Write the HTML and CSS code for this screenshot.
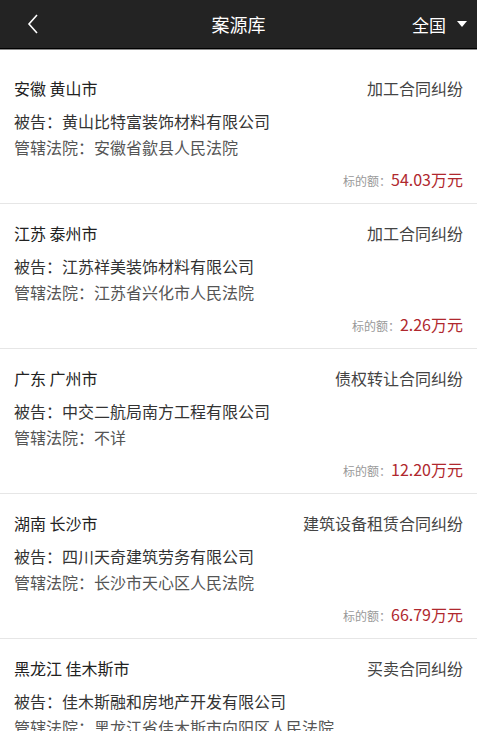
FILE: index.html
```html
<!DOCTYPE html>
<html lang="zh-CN">
<head>
    <meta charset="UTF-8">
    <meta name="viewport" content="width=device-width, initial-scale=1.0">
    <title>案源库</title>
    <link rel="stylesheet" href="styles.css">
</head>
<body>

    <!-- Top bar -->
    <header class="topbar">
        <div class="back">
            <svg width="14" height="22" viewBox="0 0 14 22">
                <polyline points="11,2 3,11 11,20" fill="none" stroke="#fff" stroke-width="1.6"/>
            </svg>
        </div>
        <h1 class="title">案源库</h1>
        <div class="region">全国 <span class="caret"></span></div>
    </header>

    <!-- Case list -->
    <div class="case-list">
        <div class="case">
            <div class="case-head">
                <span class="place">安徽 黄山市</span>
                <span class="type">加工合同纠纷</span>
            </div>
            <p class="line">被告：黄山比特富装饰材料有限公司</p>
            <p class="line court">管辖法院：安徽省歙县人民法院</p>
            <div class="amount"><span class="label">标的额：</span><span class="value">54.03万元</span></div>
        </div>
        <div class="case">
            <div class="case-head">
                <span class="place">江苏 泰州市</span>
                <span class="type">加工合同纠纷</span>
            </div>
            <p class="line">被告：江苏祥美装饰材料有限公司</p>
            <p class="line court">管辖法院：江苏省兴化市人民法院</p>
            <div class="amount"><span class="label">标的额：</span><span class="value">2.26万元</span></div>
        </div>
        <div class="case">
            <div class="case-head">
                <span class="place">广东 广州市</span>
                <span class="type">债权转让合同纠纷</span>
            </div>
            <p class="line">被告：中交二航局南方工程有限公司</p>
            <p class="line court">管辖法院：不详</p>
            <div class="amount"><span class="label">标的额：</span><span class="value">12.20万元</span></div>
        </div>
        <div class="case">
            <div class="case-head">
                <span class="place">湖南 长沙市</span>
                <span class="type">建筑设备租赁合同纠纷</span>
            </div>
            <p class="line">被告：四川天奇建筑劳务有限公司</p>
            <p class="line court">管辖法院：长沙市天心区人民法院</p>
            <div class="amount"><span class="label">标的额：</span><span class="value">66.79万元</span></div>
        </div>
        <div class="case">
            <div class="case-head">
                <span class="place">黑龙江 佳木斯市</span>
                <span class="type">买卖合同纠纷</span>
            </div>
            <p class="line">被告：佳木斯融和房地产开发有限公司</p>
            <p class="line court">管辖法院：黑龙江省佳木斯市向阳区人民法院</p>
            <div class="amount"><span class="label">标的额：</span><span class="value">35.00万元</span></div>
        </div>
    </div>

</body>
</html>
```

FILE: styles.css
```css
body {
    margin: 0;
    font-family: "Noto Sans CJK SC", "Noto Sans", sans-serif;
    background-color: #fff;
    color: #333;
}

.topbar {
    height: 48px;
    background-color: #232323;
    border-bottom: 1px solid #000;
    box-shadow: 0 1px 0 #8a8a8a;
    display: grid;
    grid-template-columns: 1fr auto 1fr;
    align-items: center;
    padding: 0 10px 0 26px;
    color: #fff;
}

.back {
    display: flex;
    align-items: center;
}

.title {
    margin: 0 0 0 -16px;
    font-size: 18px;
    font-weight: normal;
    line-height: 48px;
}

.region {
    font-size: 17px;
    display: flex;
    align-items: center;
    justify-content: flex-end;
    gap: 11px;
}

.caret {
    width: 0;
    height: 0;
    border-left: 5px solid transparent;
    border-right: 5px solid transparent;
    border-top: 6px solid #fff;
}

.case-list {
    padding-top: 10px;
}

.case {
    padding: 17px 14px 14px;
    border-bottom: 1px solid #e6e6e6;
}

.case-head {
    display: flex;
    justify-content: space-between;
    font-size: 16px;
    line-height: 24px;
    margin-bottom: 8px;
    color: #222;
}

.type {
    color: #444;
}

.line {
    margin: 0;
    font-size: 16px;
    line-height: 26px;
    color: #333;
}

.line.court {
    color: #555;
}

.amount {
    margin-top: 9px;
    height: 20px;
    display: flex;
    justify-content: flex-end;
    align-items: baseline;
}

.amount .label {
    font-size: 12px;
    line-height: 20px;
    color: #999;
}

.amount .value {
    font-size: 16px;
    line-height: 20px;
    color: #b0282e;
}
```
